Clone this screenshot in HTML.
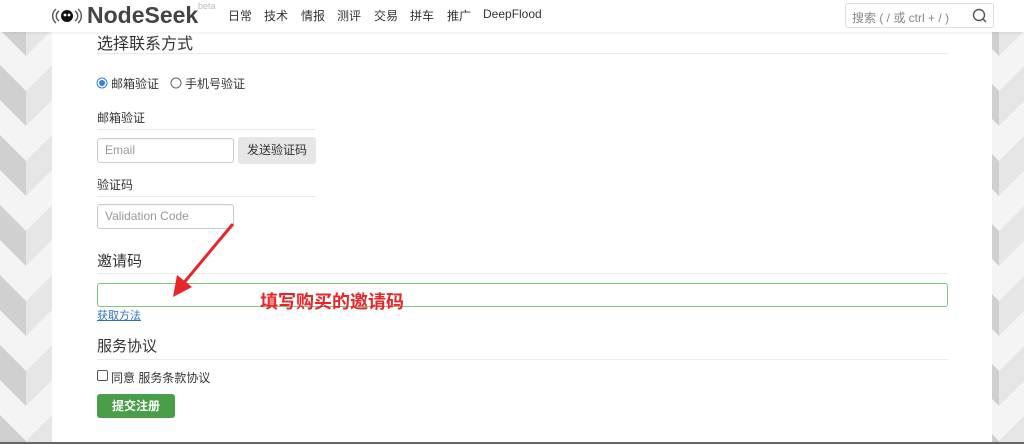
<!DOCTYPE html>
<html><head><meta charset="utf-8"><style>
*{box-sizing:border-box;margin:0;padding:0}
body{width:1024px;height:444px;overflow:hidden;background:#f4f4f4;font-family:"Liberation Sans","Noto Sans CJK SC",sans-serif;color:#333;position:relative}
.side{position:absolute;top:0;height:444px}
#hdr{position:absolute;top:0;left:0;width:1024px;height:32px;background:#fff;box-shadow:0 1px 3px rgba(0,0,0,.08);z-index:5}
#main{position:absolute;left:52px;top:0;width:940px;height:442px;background:#fff}
.a{position:absolute;white-space:nowrap}
.line{position:absolute;height:1px;background:#eaeaea}
.inp{position:absolute;border:1px solid #ccc;border-radius:3px;background:#fff;font-size:12px;color:#999;padding-left:7px;line-height:23px;box-shadow:inset 0 1px 1px rgba(0,0,0,.05)}
.nav{font-size:12px;color:#333;top:7px}
</style></head><body>
<svg class="side" style="left:0" width="52" height="444"><defs><pattern id="p" width="52" height="70" patternUnits="userSpaceOnUse" y="-5"><rect width="52" height="70" fill="#f4f4f4"/><polygon points="0,0 26,26 26,61 0,35" fill="#d0d0d0"/><polygon points="26,26 52,0 52,35 26,61" fill="#e6e6e6"/><polygon points="0,70 26,96 26,131 0,105" fill="#d0d0d0"/></pattern></defs><rect width="52" height="444" fill="url(#p)"/></svg>
<svg class="side" style="left:973px" width="52" height="444"><rect width="52" height="444" fill="url(#p)"/></svg>
<div style="position:absolute;left:0;top:442px;width:1024px;height:2px;background:#666"></div>
<div id="main"></div>
<div id="hdr">
<svg class="a" style="left:50px;top:6px" width="34" height="20"><path d="M6 3 A9 9 0 0 0 6 17 M9 5 A6 6 0 0 0 9 15" fill="none" stroke="#555" stroke-width="1.4"/><path d="M28 3 A9 9 0 0 1 28 17 M25 5 A6 6 0 0 1 25 15" fill="none" stroke="#555" stroke-width="1.4"/><circle cx="17" cy="10" r="6" fill="#111"/><circle cx="15" cy="9" r="1.4" fill="#fff"/><circle cx="19" cy="9" r="1.4" fill="#fff"/></svg>
<div class="a" style="left:87px;top:2px;font-size:23px;font-weight:bold;color:#444">NodeSeek</div>
<div class="a" style="left:198px;top:1px;font-size:9px;color:#bbb">beta</div>
<div class="a nav" style="left:228px">日常</div><div class="a nav" style="left:264px">技术</div><div class="a nav" style="left:301px">情报</div><div class="a nav" style="left:337px">测评</div><div class="a nav" style="left:374px">交易</div><div class="a nav" style="left:410px">拼车</div><div class="a nav" style="left:447px">推广</div><div class="a nav" style="left:483px">DeepFlood</div>
<div class="a" style="left:845px;top:3px;width:149px;height:25px;border:1px solid #ddd;border-radius:3px;font-size:12px;color:#888;padding:5px 0 0 6px">搜索 ( / 或 ctrl + / )</div>
<svg class="a" style="left:972px;top:8px" width="16" height="16"><circle cx="7" cy="7" r="5.5" fill="none" stroke="#555" stroke-width="1.4"/><path d="M11 11 L14 14" stroke="#555" stroke-width="1.5"/></svg>
</div>
<div class="a" style="left:97px;top:30px;font-size:16px">选择联系方式</div>
<div class="line" style="left:97px;top:53px;width:851px"></div>
<svg class="a" style="left:96px;top:77px" width="12" height="12"><circle cx="6" cy="6" r="5" fill="#fff" stroke="#3b7de0" stroke-width="1"/><circle cx="6" cy="6" r="3" fill="#3b7de0"/></svg>
<div class="a" style="left:111px;top:75px;font-size:12px">邮箱验证</div>
<svg class="a" style="left:170px;top:77px" width="12" height="12"><circle cx="6" cy="6" r="5" fill="#fff" stroke="#666" stroke-width="1"/></svg>
<div class="a" style="left:185px;top:75px;font-size:12px">手机号验证</div>
<div class="a" style="left:97px;top:109px;font-size:12px">邮箱验证</div>
<div class="line" style="left:97px;top:129px;width:219px"></div>
<div class="inp" style="left:97px;top:138px;width:137px;height:25px">Email</div>
<div class="a" style="left:238px;top:137px;width:78px;height:27px;background:#e6e6e6;border-radius:3px;font-size:12px;text-align:center;line-height:27px">发送验证码</div>
<div class="a" style="left:97px;top:176px;font-size:12px">验证码</div>
<div class="line" style="left:97px;top:196px;width:219px"></div>
<div class="inp" style="left:97px;top:204px;width:137px;height:25px">Validation Code</div>
<div class="a" style="left:97px;top:250px;font-size:15px">邀请码</div>
<div class="line" style="left:97px;top:273px;width:851px"></div>
<div class="a" style="left:97px;top:283px;width:851px;height:24px;border:1px solid #7fc47f;border-radius:3px"></div>
<div class="a" style="left:97px;top:307px;font-size:11px;color:#2f6fc6;text-decoration:underline">获取方法</div>
<div class="a" style="left:97px;top:335px;font-size:15px">服务协议</div>
<div class="line" style="left:97px;top:359px;width:851px"></div>
<div class="a" style="left:97px;top:370px;width:11px;height:11px;border:1px solid #555;border-radius:2px;background:#fff"></div>
<div class="a" style="left:111px;top:369px;font-size:12px">同意 服务条款协议</div>
<div class="a" style="left:97px;top:394px;width:78px;height:24px;background:#4a9e4a;border-radius:3px;color:#fff;font-size:12px;font-weight:bold;text-align:center;line-height:24px">提交注册</div>
<div class="a" style="left:260px;top:288px;font-size:18px;font-weight:bold;color:#e8262a">填写购买的邀请码</div>
<svg class="a" style="left:160px;top:215px" width="90" height="90"><path d="M72 10 L22 70" stroke="#e8262a" stroke-width="3" stroke-linecap="round"/><polygon points="13,82 17,60 32,72" fill="#e8262a"/></svg>
</body></html>
